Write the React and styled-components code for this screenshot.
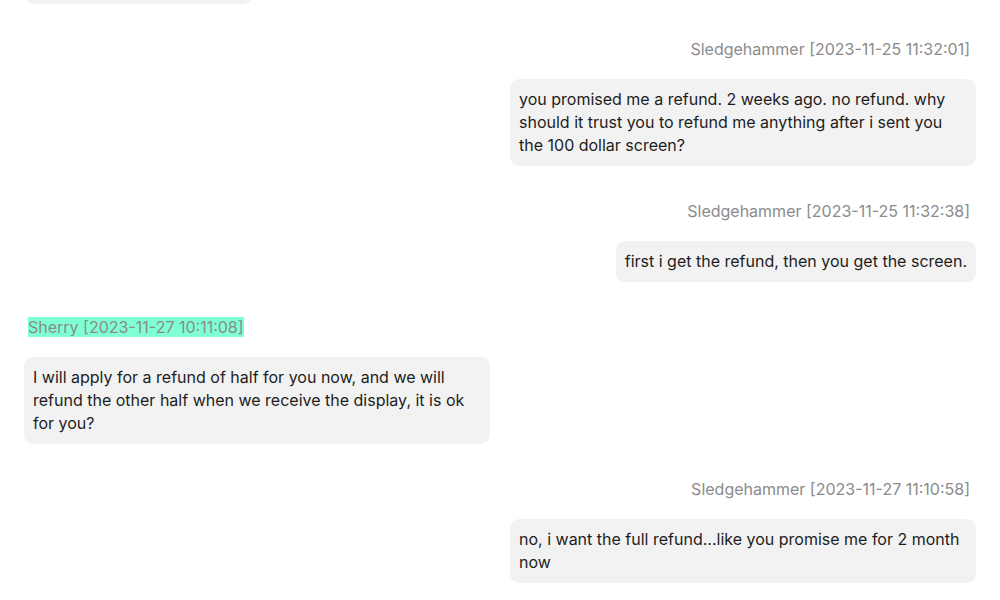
import React from 'react';
import styled, { createGlobalStyle } from 'styled-components';

const Global = createGlobalStyle`
  html, body {
    margin: 0;
    padding: 0;
    background: #ffffff;
    overflow: hidden;
  }
  body {
    font-family: Inter, "Noto Sans", "Liberation Sans", sans-serif;
    -webkit-font-smoothing: antialiased;
  }
`

const Chat = styled.main`
  display: flex;
  flex-direction: column;
  gap: 35px;
  width: 1000px;
  height: 600px;
  padding: 0 24px;
  box-sizing: border-box;
  overflow: hidden;
`

const Message = styled.section`
  display: flex;
  flex-direction: column;
  align-items: ${p => (p.$mine ? 'flex-end' : 'flex-start')};
  gap: 20px;
`

const Header = styled.div`
  font-size: 16px;
  line-height: 20px;
  color: #8b8b8b;
  padding: 0 ${p => (p.$mine ? '6px' : '0')} 0 ${p => (p.$mine ? '0' : '4px')};
`

const Mark = styled.span`
  background: ${p => (p.$highlight ? '#7fffd4' : 'transparent')};
`

const Bubble = styled.div`
  max-width: 466px;
  box-sizing: border-box;
  padding: 9px 9px;
  background: #f2f2f2;
  border-radius: 9px;
  font-size: 16px;
  line-height: 23px;
  color: #1d1d1d;
`

// tail of the previous bubble, scrolled mostly out of view
const ScrolledTail = styled(Bubble)`
  width: 227px;
  height: 20px;
  padding: 0;
  margin: -16px 0 0 1px;
`

const messages = [
  {
    mine: true,
    name: 'Sledgehammer',
    time: '2023-11-25 11:32:01',
    text: 'you promised me a refund. 2 weeks ago. no refund. why should it trust you to refund me anything after i sent you the 100 dollar screen?',
  },
  {
    mine: true,
    name: 'Sledgehammer',
    time: '2023-11-25 11:32:38',
    text: 'first i get the refund, then you get the screen.',
  },
  {
    mine: false,
    name: 'Sherry',
    time: '2023-11-27 10:11:08',
    highlight: true,
    text: 'I will apply for a refund of half for you now, and we will refund the other half when we receive the display, it is ok for you?',
  },
  {
    mine: true,
    name: 'Sledgehammer',
    time: '2023-11-27 11:10:58',
    text: 'no, i want the full refund...like you promise me for 2 month now',
  },
]

export default function App() {
  return (
    <>
      <Global />
      <Chat>
        <ScrolledTail />
        {messages.map((m, i) => (
          <Message key={i} $mine={m.mine}>
            <Header $mine={m.mine}>
              <Mark $highlight={m.highlight}>{m.name} [{m.time}]</Mark>
            </Header>
            <Bubble>{m.text}</Bubble>
          </Message>
        ))}
      </Chat>
    </>
  )
}
